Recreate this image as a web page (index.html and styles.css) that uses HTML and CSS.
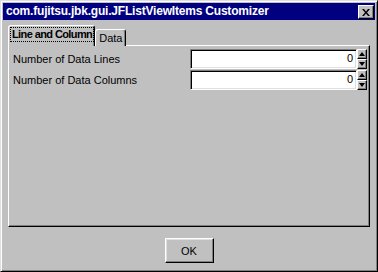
FILE: index.html
```html
<!DOCTYPE html>
<html lang="en">
<head>
    <meta charset="UTF-8">
    <meta name="viewport" content="width=device-width, initial-scale=1.0">
    <title>JFListViewItems Customizer</title>
    <link rel="stylesheet" href="styles.css">
</head>
<body>
    <div class="window">
        <div class="titlebar">
            <span class="title">com.fujitsu.jbk.gui.JFListViewItems Customizer</span>
            <span class="close">
                <svg width="8" height="7" viewBox="0 0 8 7">
                    <path d="M0 0h2l2 2.5l2-2.5h2l-3 3.5l3 3.5h-2l-2-2.5l-2 2.5h-2l3-3.5z" fill="#000"/>
                </svg>
            </span>
        </div>
        <div class="content">
            <div class="tabs">
                <div class="tab active"><span class="focus">Line and Column</span></div>
                <div class="tab">Data</div>
            </div>
            <div class="panel">
                <div class="row">
                    <span class="label">Number of Data Lines</span>
                    <span class="field">0</span>
                    <span class="spinner">
                        <span class="spin up"></span>
                        <span class="spin down"></span>
                    </span>
                </div>
                <div class="row">
                    <span class="label">Number of Data Columns</span>
                    <span class="field">0</span>
                    <span class="spinner">
                        <span class="spin up"></span>
                        <span class="spin down"></span>
                    </span>
                </div>
            </div>
            <div class="actions">
                <span class="btn">OK</span>
            </div>
        </div>
    </div>
</body>
</html>
```

FILE: styles.css
```css
body {
    margin: 0;
    background: #c0c0c0;
    font-family: "Liberation Sans", Arial, sans-serif;
    font-size: 11px;
    color: #000;
}

.window {
    width: 378px;
    height: 272px;
    box-sizing: border-box;
    display: flex;
    flex-direction: column;
    padding: 2px;
    border: 1px solid;
    border-color: #dfdfdf #000 #000 #dfdfdf;
    box-shadow: inset 1px 1px #fff, inset -1px -1px #808080;
    background: #c0c0c0;
}

.titlebar {
    height: 17px;
    display: flex;
    align-items: flex-start;
    background: #000080;
    color: #fff;
}
.title {
    font-weight: bold;
    font-size: 12px;
    letter-spacing: -0.2px;
    line-height: 17px;
    padding-left: 3px;
    flex: 1;
}
.close {
    width: 16px;
    height: 14px;
    margin: 2px 1px 0 0;
    box-sizing: border-box;
    display: flex;
    align-items: center;
    justify-content: center;
    background: #c0c0c0;
    border: 1px solid;
    border-color: #fff #000 #000 #fff;
    box-shadow: inset -1px -1px #808080;
}

.content {
    flex: 1;
    display: flex;
    flex-direction: column;
    padding: 6px 5px 6px 5px;
}

.tabs {
    display: flex;
    align-items: flex-end;
    height: 20px;
    position: relative;
    z-index: 1;
    margin-bottom: -1px;
}
.tab {
    height: 17px;
    box-sizing: border-box;
    padding: 2px 3px 0 3px;
    border: 1px solid;
    border-bottom: none;
    border-color: #fff #000 #000 #fff;
    border-radius: 3px 3px 0 0;
    box-shadow: inset -1px 0 #808080;
    background: #c0c0c0;
}
.tab.active {
    height: 21px;
    padding: 2px 1px 0 2px;
    font-weight: bold;
    letter-spacing: -0.6px;
}
.focus {
    display: inline-block;
    padding: 0 1px;
    line-height: 13px;
    outline: 1px dotted #000;
}

.panel {
    flex: 1;
    display: flex;
    flex-direction: column;
    gap: 1px;
    padding: 3px 2px 0 4px;
    border: 1px solid;
    border-color: #fff #000 #000 #fff;
    box-shadow: inset -1px -1px #808080;
}
.row {
    display: grid;
    grid-template-columns: 1fr 167px 10px;
    align-items: center;
    height: 20px;
}
.field {
    height: 20px;
    box-sizing: border-box;
    padding-right: 3px;
    text-align: right;
    line-height: 16px;
    background: #fff;
    border: 1px solid;
    border-color: #808080 #fff #fff #808080;
    box-shadow: inset 1px 1px #000, inset -1px -1px #dfdfdf;
}
.spinner {
    display: flex;
    flex-direction: column;
    height: 20px;
}
.spin {
    height: 10px;
    box-sizing: border-box;
    position: relative;
    background: #c0c0c0;
    border: 1px solid;
    border-color: #fff #000 #000 #fff;
    box-shadow: inset -1px -1px #808080;
}
.spin::after {
    content: "";
    position: absolute;
    left: 1px;
    top: 2px;
    border-left: 3px solid transparent;
    border-right: 3px solid transparent;
}
.up::after {
    border-bottom: 4px solid #000;
}
.down::after {
    border-top: 4px solid #000;
}

.actions {
    display: flex;
    justify-content: center;
    padding-top: 11px;
}
.btn {
    width: 49px;
    height: 25px;
    box-sizing: border-box;
    display: flex;
    align-items: center;
    justify-content: center;
    border: 1px solid;
    border-color: #fff #000 #000 #fff;
    box-shadow: inset -1px -1px #808080, inset 1px 1px #dfdfdf;
}
```
